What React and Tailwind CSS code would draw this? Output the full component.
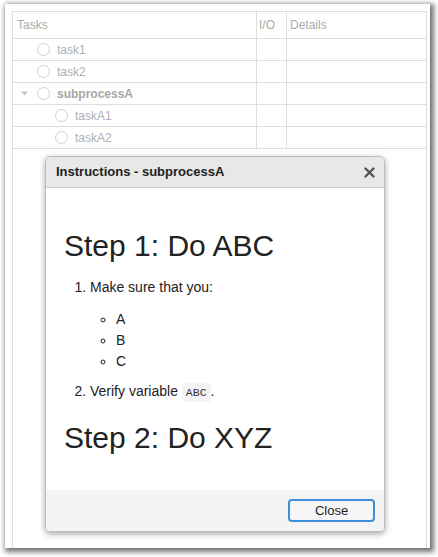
import React from 'react';

const rows = [
  { name: 'task1', level: 0 },
  { name: 'task2', level: 0 },
  { name: 'subprocessA', level: 0, group: true },
  { name: 'taskA1', level: 1 },
  { name: 'taskA2', level: 1 },
];

const TaskRow = ({ row }) => (
  <div className="flex h-[22px] border-b border-[#dddddd]">
    <div className="w-[243px] flex items-center">
      {row.level > 0 && <div className="w-[18px] shrink-0" />}
      <div className="w-[24px] shrink-0 flex items-center pl-[8px]">
        {row.group && (
          <svg width="7" height="5" viewBox="0 0 7 5">
            <path d="M0 0.5h7L3.5 4.5z" fill="#c4c4c4" />
          </svg>
        )}
      </div>
      <span className="w-[13px] h-[13px] shrink-0 rounded-full border border-[#cfcfcf] bg-white"></span>
      <span className={`ml-[7px] text-[12px] ${row.group ? 'font-bold text-[#a6a6a6]' : 'text-[#b0b0b0]'}`}>
        {row.name}
      </span>
    </div>
    <div className="w-[30px] border-l border-[#dddddd]"></div>
    <div className="flex-1 border-l border-[#dddddd]"></div>
  </div>
);

export default function App() {
  return (
    <div className="w-[438px] h-[557px] pl-[5px] pt-[4px] bg-white" style={{ fontFamily: '"Liberation Sans", Arial, sans-serif' }}>
      <div className="relative w-[425px] h-[544px] bg-white shadow-[2px_2px_5px_2px_rgba(0,0,0,0.55)]">
        {/* Task grid */}
        <div className="absolute left-[7px] top-[7px] bottom-0 w-[415px] border-l border-r border-[#dddddd]">
          <div className="flex h-[28px] border-t border-b border-[#dddddd] text-[12px] text-[#aaaaaa]">
            <div className="w-[243px] flex items-center pl-[4px]">Tasks</div>
            <div className="w-[30px] flex items-center pl-[2px] border-l border-[#dddddd]">I/O</div>
            <div className="flex-1 flex items-center pl-[3px] border-l border-[#dddddd]">Details</div>
          </div>
          {rows.map((r) => (
            <TaskRow key={r.name} row={r} />
          ))}
        </div>

        {/* Instructions dialog */}
        <div className="absolute left-[40px] top-[152px] w-[340px] h-[376px] flex flex-col rounded-[5px] border border-[#bdbdbd] bg-white shadow-[0_2px_6px_rgba(0,0,0,0.35)] overflow-hidden">
          <div className="h-[31px] shrink-0 flex items-center justify-between pl-[10px] pr-[9px] bg-[#e8e8e8] border-b border-[#c8c8c8]">
            <span className="text-[13px] font-bold text-[#222222]">Instructions - subprocessA</span>
            <svg width="11" height="11" viewBox="0 0 11 11">
              <path d="M1.5 1.5l8 8M9.5 1.5l-8 8" stroke="#555555" strokeWidth="2.4" strokeLinecap="round" />
            </svg>
          </div>
          <div className="flex-1 px-[18px] pt-[41px] text-[#222222]">
            <h1 className="text-[30px] leading-[34px]">Step 1: Do ABC</h1>
            <ol className="list-decimal pl-[26px] mt-[14px] text-[14px] leading-[21px]">
              <li>
                Make sure that you:
                <ul className="list-[circle] pl-[26px] mt-[11px]">
                  <li>A</li>
                  <li>B</li>
                  <li>C</li>
                </ul>
              </li>
              <li className="mt-[9px]">
                Verify variable{' '}
                <code className="inline-block px-[4px] leading-[19px] rounded-[3px] bg-[#f4f4f4] text-[11.5px] text-[#333333]" style={{ fontFamily: '"Liberation Mono", monospace' }}>
                  ABC
                </code>
                .
              </li>
            </ol>
            <h1 className="text-[30px] leading-[34px] mt-[19px]">Step 2: Do XYZ</h1>
          </div>
          <div className="h-[41px] shrink-0 flex items-center justify-end pr-[9px] bg-[#f4f4f4]">
            <button className="w-[87px] h-[23px] rounded-[4px] border-2 border-[#3d8ddb] bg-[#f6f6f6] text-[13px] text-[#222222]">
              Close
            </button>
          </div>
        </div>
      </div>
    </div>
  );
}
